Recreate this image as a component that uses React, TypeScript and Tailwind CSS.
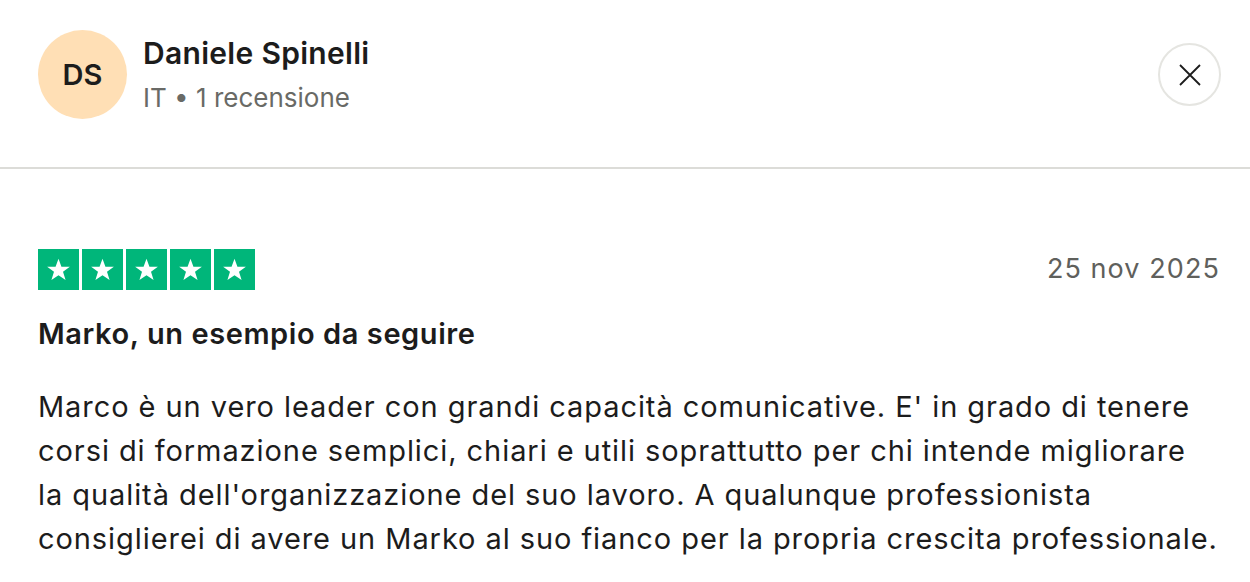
function Star() {
  return (
    <svg viewBox="0 0 24 24" className="h-[27px] w-[27px]" fill="white">
      <path d="M12 2.5l2.6 7.1h7.5l-6.1 4.5 2.3 7.3L12 17l-6.3 4.4 2.3-7.3-6.1-4.5h7.5z" />
    </svg>
  );
}

export default function App() {
  return (
    <div className="min-h-screen bg-white font-['Inter',sans-serif] text-[#1c1c1c]">
      <header className="flex items-center justify-between pl-[38px] pr-[29px] pt-[30px] pb-[48px]">
        <div className="flex items-center gap-[16px]">
          <div className="flex h-[89px] w-[89px] items-center justify-center rounded-full bg-[#ffdfb5] text-[29px] font-semibold">
            DS
          </div>
          <div className="flex flex-col">
            <span className="text-[30px] font-semibold leading-[40px] tracking-[0.01em]">Daniele Spinelli</span>
            <span className="mt-[7px] text-[26px] leading-[36px] text-[#696a66]">IT • 1 recensione</span>
          </div>
        </div>
        <button
          type="button"
          aria-label="Chiudi"
          className="flex h-[63px] w-[63px] items-center justify-center rounded-full border-2 border-[#e5e5e1]"
        >
          <svg viewBox="0 0 22 22" className="h-[22px] w-[22px]" stroke="#1c1c1c" strokeWidth={1.8} fill="none">
            <path d="M1 1l20 20M21 1L1 21" />
          </svg>
        </button>
      </header>

      <div className="h-[2px] bg-[#dcdcd8]" />

      <main className="pl-[38px] pr-[30px] pt-[80px]">
        <div className="flex items-center justify-between">
          <div className="flex gap-[3px]">
            {[0, 1, 2, 3, 4].map((i) => (
              <div key={i} className="flex h-[41px] w-[41px] items-center justify-center bg-[#00b67a]">
                <Star />
              </div>
            ))}
          </div>
          <span className="text-[27px] tracking-[0.04em] text-[#5f605c]">25 nov 2025</span>
        </div>
        <h2 className="mt-[22px] text-[29px] font-semibold tracking-[0.02em]">Marko, un esempio da seguire</h2>
        <p className="mt-[29px] max-w-[1180px] text-[29px] leading-[44px] tracking-[0.032em]">
          Marco è un vero leader con grandi capacità comunicative. E' in grado di tenere corsi di formazione semplici,
          chiari e utili soprattutto per chi intende migliorare la qualità dell'organizzazione del suo lavoro. A
          qualunque professionista consiglierei di avere un Marko al suo fianco per la propria crescita professionale.
        </p>
      </main>
    </div>
  );
}
